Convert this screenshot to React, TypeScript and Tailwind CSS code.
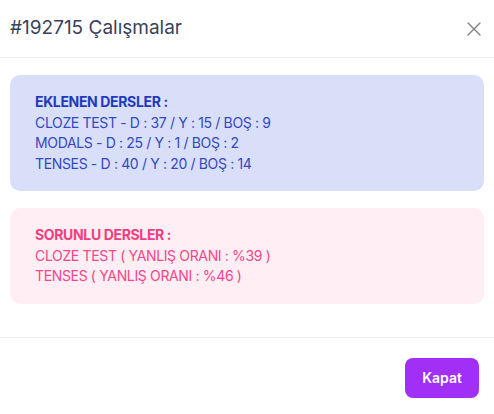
import { X } from 'lucide-react';

const added = [
    'CLOZE TEST - D : 37 / Y : 15 / BOŞ : 9',
    'MODALS - D : 25 / Y : 1 / BOŞ : 2',
    'TENSES - D : 40 / Y : 20 / BOŞ : 14',
];

const problems = [
    'CLOZE TEST ( YANLIŞ ORANI : %39 )',
    'TENSES ( YANLIŞ ORANI : %46 )',
];

export default function App() {
    return (
        <div className="w-[494px] h-[414px] bg-white flex flex-col font-['Inter',sans-serif]">
            {/* Header */}
            <div className="h-[58px] flex items-center justify-between pl-[10px] pr-[8px] border-b border-[#ececec]">
                <h2 className="text-[19px] tracking-[0px] text-[#3a3f5c] font-normal">#192715 Çalışmalar</h2>
                <button className="text-[#808080]">
                    <X className="w-[24px] h-[24px]" strokeWidth={1.4} />
                </button>
            </div>

            {/* Body */}
            <div className="flex flex-col gap-[17px] px-[10px] pt-[17px] pb-[33px] border-b border-[#ececec]">
                <div className="rounded-[10px] bg-[#d9dff9] px-[25px] py-[17px] text-[14px] leading-[20.5px] tracking-[-0.35px] text-[#3448c0]">
                    <div className="font-bold text-[#1f3abb]">EKLENEN DERSLER :</div>
                    {added.map(line => <div key={line}>{line}</div>)}
                </div>
                <div className="rounded-[10px] bg-[#ffeef3] px-[25px] py-[17px] text-[14px] leading-[20.5px] tracking-[-0.35px] text-[#f5478a]">
                    <div className="font-bold text-[#f53d7e]">SORUNLU DERSLER :</div>
                    {problems.map(line => <div key={line}>{line}</div>)}
                </div>
            </div>

            {/* Footer */}
            <div className="flex justify-end pt-[20px] pr-[15px]">
                <button className="w-[74px] h-[40px] rounded-[8px] bg-[#a12ff6] text-white text-[14px] font-semibold">
                    Kapat
                </button>
            </div>
        </div>
    );
}
